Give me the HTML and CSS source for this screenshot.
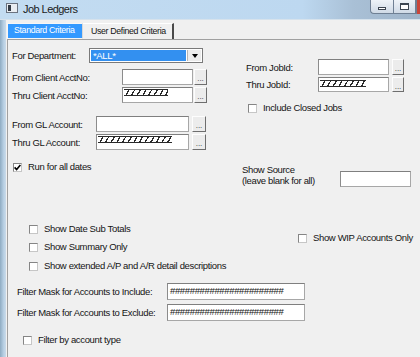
FILE: index.html
```html
<!DOCTYPE html>
<html lang="en">
<head>
  <meta charset="UTF-8">
  <title>Job Ledgers</title>
  <link rel="stylesheet" href="styles.css">
</head>
<body>
  <div class="window">
    <div class="titlebar">
      <svg class="app-icon" width="12" height="10" viewBox="0 0 12 10">
        <rect x="0.5" y="0.5" width="11" height="9" fill="#e9edf2" stroke="#6b7380"/>
        <rect x="2" y="2" width="3" height="6" fill="#333a44"/>
      </svg>
      <div class="title">Job Ledgers</div>
      <div class="controls">
        <div class="ctl ctl-min"><span class="min-bar"></span></div>
        <div class="ctl ctl-max"><span class="max-box"></span></div>
        <div class="ctl-close"></div>
      </div>
    </div>

    <div class="frame">
      <div class="edge"></div>
      <div class="client">
        <div class="tabs">
          <div class="tab tab-active">Standard Criteria</div>
          <div class="tab">User Defined Criteria</div>
        </div>

        <div class="panel">
          <div class="top">
            <div class="left-col">
              <div class="row row-dept">
                <div class="label lbl-dept">For Department:</div>
                <div class="combo">
                  <div class="combo-value">*ALL*</div>
                  <div class="combo-btn"><span class="arrow"></span></div>
                </div>
              </div>
              <div class="row row-client-from">
                <div class="label lbl-client">From Client AcctNo:</div>
                <div class="input in-client"></div>
                <div class="dots btn-client">...</div>
              </div>
              <div class="row row-pair">
                <div class="label lbl-client">Thru Client AcctNo:</div>
                <div class="input in-client"><div class="hatch hatch-client"></div></div>
                <div class="dots btn-client">...</div>
              </div>
              <div class="row row-gl-from">
                <div class="label lbl-gl">From GL Account:</div>
                <div class="input in-gl"></div>
                <div class="dots btn-gl">...</div>
              </div>
              <div class="row row-pair">
                <div class="label lbl-gl">Thru GL Account:</div>
                <div class="input in-gl"><div class="hatch hatch-gl"></div></div>
                <div class="dots btn-gl">...</div>
              </div>
            </div>

            <div class="right-col">
              <div class="row row-job-from">
                <div class="label lbl-job">From JobId:</div>
                <div class="input in-job"></div>
                <div class="dots btn-job">...</div>
              </div>
              <div class="row row-pair row-job-thru">
                <div class="label lbl-job">Thru JobId:</div>
                <div class="input in-job"><div class="hatch hatch-job"></div></div>
                <div class="dots btn-job">...</div>
              </div>
              <label class="check check-closed"><span class="box"></span>Include Closed Jobs</label>
            </div>
          </div>

          <div class="dates">
            <label class="check check-run">
              <span class="box">
                <svg width="7" height="7" viewBox="0 0 7 7"><polyline points="0.6,3.4 2.6,5.6 6.4,1" fill="none" stroke="#000" stroke-width="1.6"/></svg>
              </span>Run for all dates
            </label>
            <div class="label lbl-source">Show Source<br>(leave blank for all)</div>
            <div class="input in-source"></div>
          </div>

          <div class="options">
            <div class="opt-col">
              <label class="check"><span class="box"></span>Show Date Sub Totals</label>
              <label class="check opt-2"><span class="box"></span>Show Summary Only</label>
              <label class="check opt-3"><span class="box"></span>Show extended A/P and A/R detail descriptions</label>
            </div>
            <label class="check check-wip"><span class="box"></span>Show WIP Accounts Only</label>
          </div>

          <div class="masks">
            <div class="row row-mask">
              <div class="label lbl-mask">Filter Mask for Accounts to Include:</div>
              <div class="input in-mask">#######################</div>
            </div>
            <div class="row row-mask row-mask-2">
              <div class="label lbl-mask">Filter Mask for Accounts to Exclude:</div>
              <div class="input in-mask">#######################</div>
            </div>
          </div>

          <label class="check check-type"><span class="box"></span>Filter by account type</label>
        </div>
      </div>
    </div>
  </div>
</body>
</html>
```

FILE: styles.css
```css
  *{
    margin: 0;
    padding: 0;
    box-sizing: border-box;
  }
  body{
    font-family: "Liberation Sans", Arial, sans-serif;
    font-size: 9.5px;
    letter-spacing: -0.35px;
    color: #141414;
    background-color: #f0f0f0;
  }
  .window{
    width: 420px;
    height: 357px;
    overflow: hidden;
    display: flex;
    flex-direction: column;
  }

  /* title bar */
  .titlebar{
    height: 20px;
    flex: none;
    display: flex;
    align-items: flex-start;
    background: linear-gradient(to right, #c3dcf1 0, #bdd8f0 72%, #a9c0d6 84%, #9fb4c9 100%);
    border-bottom: 1px solid #d6e2ec;
  }
  .app-icon{
    margin: 3px 0 0 6px;
  }
  .title{
    margin: 2px 0 0 5px;
    font-size: 11px;
    line-height: 14px;
    letter-spacing: -0.55px;
    color: #1b1b1b;
  }
  .controls{
    margin-left: auto;
    display: flex;
    height: 14px;
  }
  .ctl{
    width: 23px;
    height: 14px;
    border: 1px solid #6f8094;
    border-top: none;
    background: linear-gradient(#eef3f8, #cfdae6);
    display: flex;
    align-items: center;
    justify-content: center;
  }
  .ctl-min{
    border-bottom-left-radius: 4px;
    border-right: none;
  }
  .min-bar{
    width: 8px;
    height: 3px;
    margin-top: 4px;
    background: #fff;
    border: 1px solid #3c4652;
  }
  .max-box{
    width: 9px;
    height: 7px;
    border: 1px solid #3c4652;
    border-top-width: 2px;
    background: #fff;
  }
  .ctl-close{
    width: 4px;
    height: 14px;
    background: #c9463a;
    border-left: 1px solid #6f8094;
  }

  /* window body */
  .frame{
    flex: 1;
    display: flex;
  }
  .edge{
    width: 6px;
    background: linear-gradient(to right, #8eabc2, #b7cfe3 60%, #cadbea);
  }
  .client{
    flex: 1;
    display: flex;
    flex-direction: column;
  }
  .tabs{
    height: 19px;
    padding-top: 3px;
    display: flex;
    align-items: stretch;
  }
  .tab{
    height: 16px;
    font-size: 8.8px;
    line-height: 14px;
    padding-left: 8px;
    width: 91px;
    border-top: 1px solid #fff;
    border-right: 2px solid #4a4a4a;
  }
  .tab-active{
    margin-left: 1px;
    width: 76px;
    padding-left: 6px;
    color: #fff;
    background: #3399ff;
    border: 1px solid #f6f6f6;
    border-right: 1px solid #d8d8d8;
    line-height: 13px;
  }
  .panel{
    flex: 1;
    margin-left: 1px;
    border-top: 1px solid #a0a0a0;
    border-left: 1px solid #a0a0a0;
  }

  /* shared controls */
  .row{
    display: flex;
    align-items: center;
    height: 16px;
  }
  .label{
    flex: none;
    white-space: nowrap;
  }
  .input{
    flex: none;
    height: 100%;
    background: #fff;
    border: 1px solid #a7a7a7;
    border-top-color: #7f7f7f;
    border-left-color: #8c8c8c;
  }
  .dots{
    flex: none;
    height: 100%;
    background: #ececec;
    border: 1px solid;
    border-color: #fdfdfd #6e6e6e #6e6e6e #fdfdfd;
    font-size: 8px;
    letter-spacing: 0;
    line-height: 17px;
    text-align: center;
    color: #333;
  }
  .hatch{
    height: 7px;
    margin: 1px 0 0 1px;
    border-top: 1px solid #2a2a2a;
    border-bottom: 1px solid #2a2a2a;
    background: repeating-linear-gradient(120deg, transparent 0 3.6px, #2a2a2a 3.6px 4.9px);
  }
  .check{
    display: flex;
    align-items: center;
    gap: 6px;
    height: 10px;
    line-height: 10px;
    white-space: nowrap;
  }
  .box{
    flex: none;
    width: 9px;
    height: 9px;
    background: #fff;
    border: 1px solid #c6c6c6;
    border-top-color: #858585;
    border-left-color: #858585;
    display: flex;
    align-items: center;
    justify-content: center;
  }

  /* upper block */
  .top{
    display: flex;
    align-items: flex-start;
  }
  .left-col{
    margin-left: 4px;
    width: 195px;
  }
  .row-dept{
    margin-top: 8px;
    height: 15px;
  }
  .lbl-dept{
    width: 77px;
  }
  .combo{
    width: 114px;
    height: 15px;
    display: flex;
    background: #fff;
    border: 1px solid #7a7a7a;
    padding: 1px;
  }
  .combo-value{
    flex: 1;
    background: #3390f0;
    color: #fff;
    padding-left: 2px;
    line-height: 11px;
  }
  .combo-btn{
    width: 14px;
    margin-left: 1px;
    background: #ececec;
    border-left: 1px solid #b5b5b5;
    display: flex;
    align-items: center;
    justify-content: center;
  }
  .arrow{
    width: 0;
    height: 0;
    border-left: 3px solid transparent;
    border-right: 3px solid transparent;
    border-top: 4px solid #000;
  }
  .row-client-from{
    margin-top: 6px;
  }
  .row-pair{
    margin-top: 2px;
  }
  .lbl-client{
    width: 110px;
  }
  .in-client{
    width: 71px;
  }
  .btn-client{
    width: 13px;
    margin-left: 1px;
  }
  .hatch-client{
    width: 44px;
  }
  .row-gl-from{
    margin-top: 13px;
  }
  .lbl-gl{
    width: 84px;
  }
  .in-gl{
    width: 93px;
  }
  .btn-gl{
    width: 14px;
    margin-left: 3px;
  }
  .hatch-gl{
    width: 74px;
  }
  .right-col{
    margin-left: 39px;
  }
  .row-job-from{
    margin-top: 19px;
  }
  .row-job-thru{
    height: 15px;
  }
  .lbl-job{
    width: 72px;
  }
  .in-job{
    width: 71px;
  }
  .btn-job{
    width: 12px;
    margin-left: 3px;
  }
  .hatch-job{
    width: 46px;
    margin-top: 2px;
  }
  .check-closed{
    margin: 11px 0 0 2px;
  }

  /* dates block */
  .dates{
    display: flex;
    align-items: flex-start;
    margin-top: 12px;
  }
  .check-run{
    margin-left: 5px;
    width: 229px;
  }
  .lbl-source{
    width: 98px;
    margin-top: 2px;
    line-height: 11px;
  }
  .in-source{
    width: 71px;
    height: 16px;
    margin-top: 9px;
  }

  /* options block */
  .options{
    display: flex;
    align-items: flex-start;
    margin-top: 37px;
  }
  .opt-col{
    margin-left: 21px;
    width: 269px;
  }
  .opt-2{
    margin-top: 8px;
  }
  .opt-3{
    margin-top: 9px;
  }
  .check-wip{
    margin-top: 9px;
  }

  /* mask block */
  .masks{
    margin-top: 12px;
  }
  .row-mask{
    height: 17px;
  }
  .row-mask-2{
    margin-top: 4px;
  }
  .lbl-mask{
    margin-left: 9px;
    width: 150px;
  }
  .in-mask{
    width: 138px;
    padding-left: 2px;
    line-height: 14px;
    overflow: hidden;
    white-space: nowrap;
  }
  .check-type{
    margin: 14px 0 0 15px;
  }
```
